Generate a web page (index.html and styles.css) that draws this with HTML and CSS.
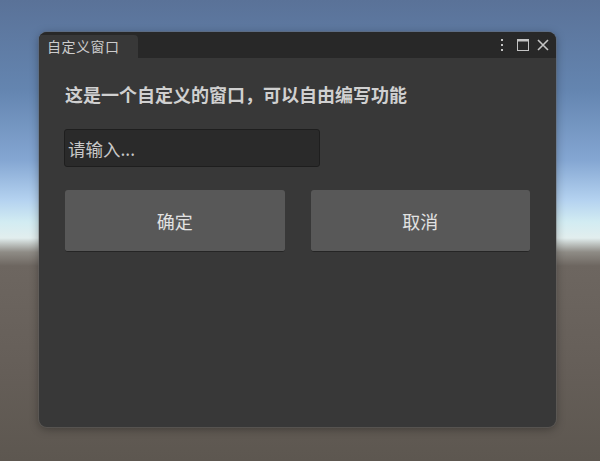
FILE: index.html
```html
<!DOCTYPE html>
<html lang="zh-CN">
<head>
  <meta charset="UTF-8" />
  <meta name="viewport" content="width=device-width, initial-scale=1.0"/>
  <title>自定义窗口</title>
  <link rel="stylesheet" href="styles.css">
</head>
<body>

  <div class="window">
    <!-- Title bar -->
    <div class="titlebar">
      <div class="tab">自定义窗口</div>
      <div class="controls">
        <svg class="icon kebab" width="6" height="14" viewBox="0 0 6 14">
          <rect x="2" y="1" width="2" height="2" />
          <rect x="2" y="6" width="2" height="2" />
          <rect x="2" y="11" width="2" height="2" />
        </svg>
        <svg class="icon" width="12" height="12" viewBox="0 0 12 12">
          <rect x="0.5" y="0.5" width="11" height="11" fill="none" stroke="#c4c4c4" />
          <rect x="0" y="0" width="12" height="2.5" />
        </svg>
        <svg class="icon" width="12" height="12" viewBox="0 0 12 12">
          <path d="M1 1 L11 11 M11 1 L1 11" stroke="#c4c4c4" stroke-width="1.6" fill="none" />
        </svg>
      </div>
    </div>

    <!-- Content -->
    <div class="content">
      <p class="heading">这是一个自定义的窗口，可以自由编写功能</p>
      <input class="field" type="text" placeholder="请输入..." />
      <div class="actions">
        <button class="btn">确定</button>
        <button class="btn">取消</button>
      </div>
    </div>
  </div>

</body>
</html>
```

FILE: styles.css
```css
html, body {
  margin: 0;
  height: 100%;
}

body {
  font-family: "Noto Sans CJK SC", "Noto Sans", sans-serif;
  background: linear-gradient(to bottom,
    #5a7298 0px,
    #6485b0 90px,
    #84a6d2 160px,
    #b4d2f0 200px,
    #d2ecf2 222px,
    #e2eeee 238px,
    #8f8c86 252px,
    #6d6660 266px,
    #665f59 360px,
    #5d5750 461px);
  overflow: hidden;
  padding-top: 32px;
  padding-left: 39px;
  box-sizing: border-box;
}

.window {
  width: 517px;
  height: 395px;
  background: #383838;
  border-radius: 8px;
  box-sizing: border-box;
  overflow: hidden;
  box-shadow: 0 0 0 1px rgba(110, 110, 110, 0.35), 0 2px 10px rgba(0, 0, 0, 0.35);
}

.titlebar {
  height: 26px;
  background: #282828;
  display: flex;
  align-items: flex-end;
  justify-content: space-between;
}

.tab {
  width: 99px;
  height: 23px;
  background: #383838;
  border-top-right-radius: 4px;
  color: #cccccc;
  font-size: 14px;
  letter-spacing: 0.5px;
  line-height: 22px;
  padding-left: 8px;
  box-sizing: border-box;
}

.controls {
  display: flex;
  align-items: center;
  gap: 8px;
  height: 26px;
  padding-right: 7px;
}

.icon {
  fill: #c4c4c4;
  display: block;
}

.kebab {
  margin-right: 4px;
}

.content {
  padding: 23px 26px 0 26px;
}

.heading {
  margin: 0;
  color: #d0d0d0;
  font-size: 18px;
  font-weight: bold;
  line-height: 26px;
}

.field {
  display: block;
  margin: 22px 0 0 -1px;
  width: 256px;
  height: 38px;
  box-sizing: border-box;
  background: #2a2a2a;
  border: 1px solid #1e1e1e;
  border-radius: 3px;
  padding: 0 3px;
  font-family: inherit;
  font-size: 17.5px;
  color: #d2d2d2;
  outline: none;
}

.field::placeholder {
  color: #c8c8c8;
}

.actions {
  display: flex;
  gap: 26px;
  margin-top: 23px;
}

.btn {
  flex: 1;
  height: 62px;
  background: #585858;
  border: none;
  border-bottom: 1px solid #252525;
  border-radius: 3px;
  color: #e2e2e2;
  font-family: inherit;
  font-size: 18px;
  padding: 0;
  cursor: pointer;
}

.btn:hover {
  background: #676767;
}
```
